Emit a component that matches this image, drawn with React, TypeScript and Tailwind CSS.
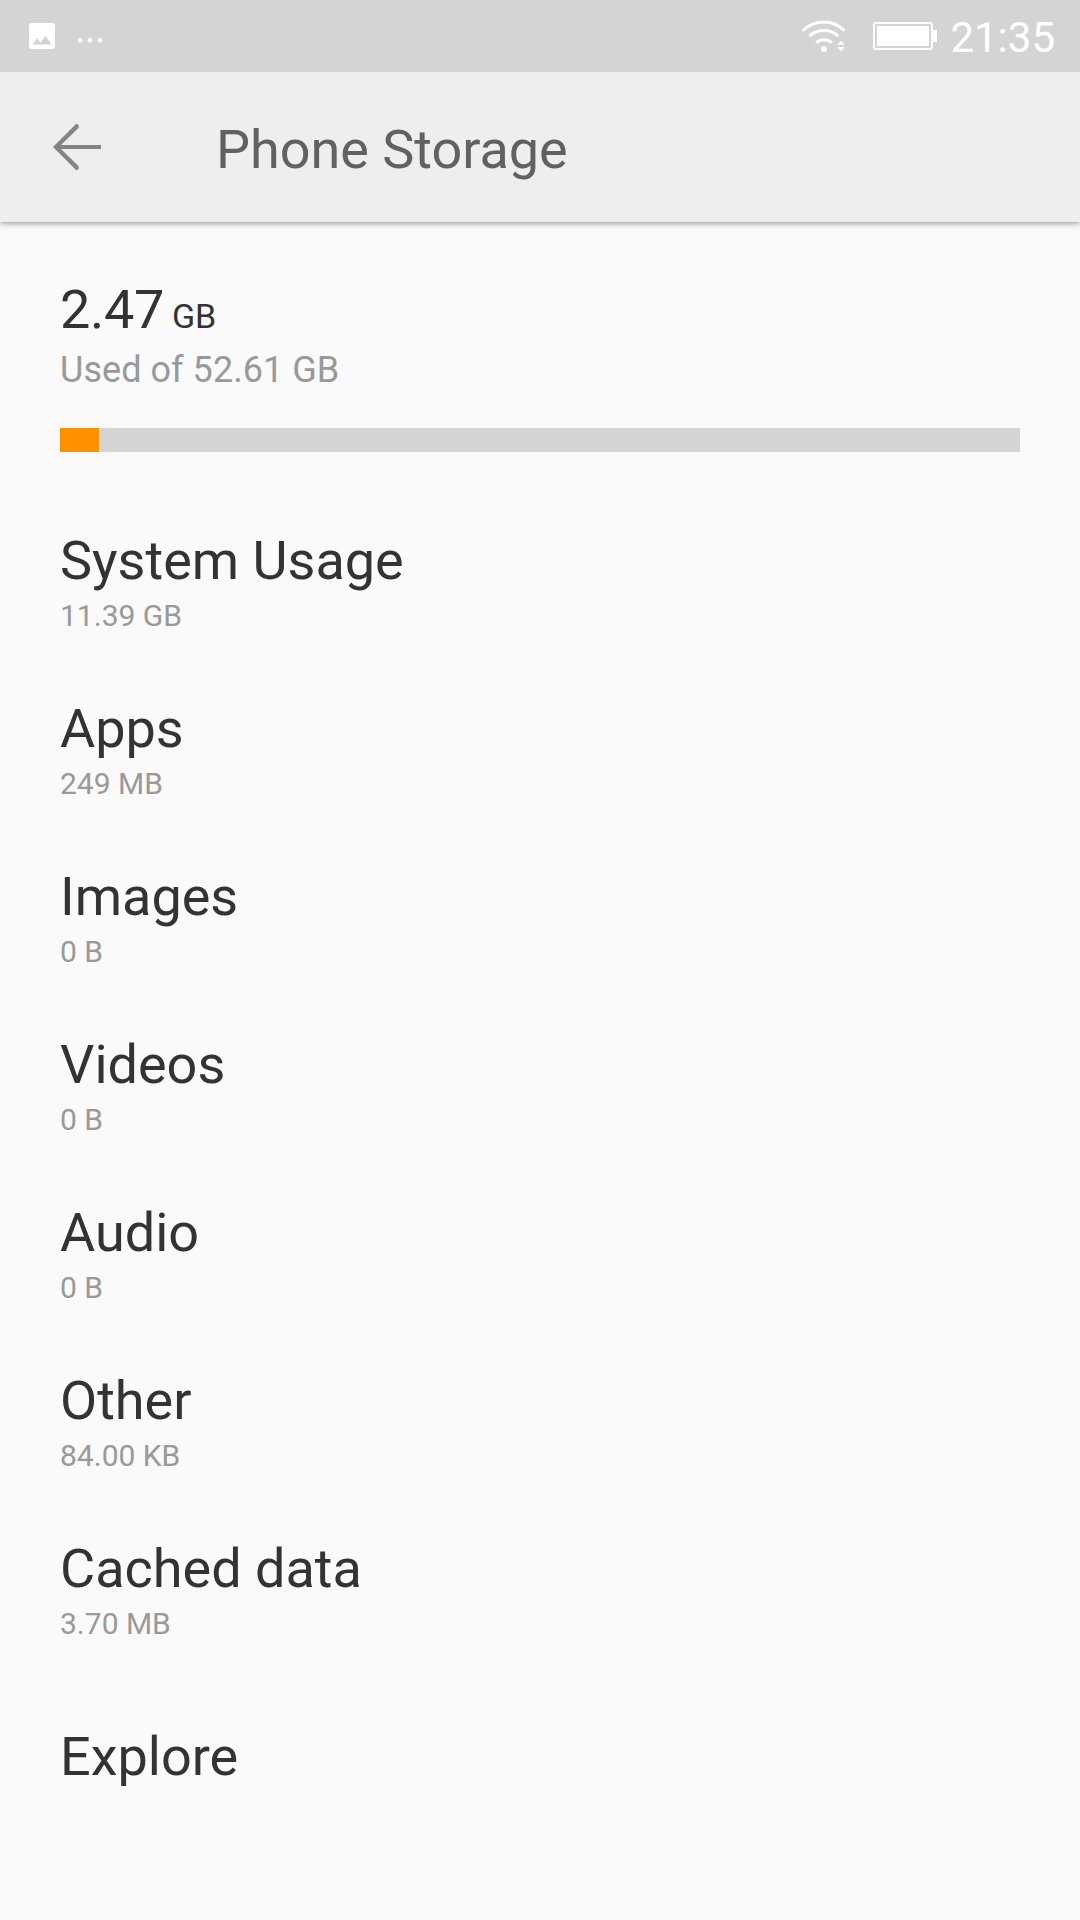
const categories = [
  { label: 'System Usage', size: '11.39 GB' },
  { label: 'Apps', size: '249 MB' },
  { label: 'Images', size: '0 B' },
  { label: 'Videos', size: '0 B' },
  { label: 'Audio', size: '0 B' },
  { label: 'Other', size: '84.00 KB' },
  { label: 'Cached data', size: '3.70 MB' },
];

function StatusBar() {
  return (
    <div className="relative z-10 h-[72px] bg-[#d4d4d4] flex items-center justify-between pl-[29px] pr-[25px] text-white">
      <div className="flex items-center">
        {/* Picture notification */}
        <svg width="26" height="26" viewBox="0 0 26 26">
          <path
            fillRule="evenodd"
            fill="currentColor"
            d="M3 0h20a3 3 0 0 1 3 3v20a3 3 0 0 1-3 3H3a3 3 0 0 1-3-3V3a3 3 0 0 1 3-3zM3.500 21.500h19.200L16.500 13l-5 6.500L8 15z"
          />
        </svg>
        {/* More notifications */}
        <svg className="ml-[22px] mt-[8px]" width="26" height="8" viewBox="0 0 26 8" fill="currentColor">
          <circle cx="3" cy="4.300" r="2.300" />
          <circle cx="13" cy="4.300" r="2.300" />
          <circle cx="23" cy="4.300" r="2.300" />
        </svg>
      </div>
      <div className="flex items-center">
        {/* Wifi */}
        <svg width="46" height="36" viewBox="0 0 46 36" fill="none" stroke="currentColor" strokeWidth="3" strokeLinecap="round">
          <path d="M2.700 12A29 29 0 0 1 42.700 12" />
          <path d="M9.500 17.200A21.700 21.700 0 0 1 36.300 17.200" />
          <path d="M16 24A13 13 0 0 1 30 24" />
          <circle cx="22.900" cy="31" r="3.100" fill="currentColor" stroke="none" />
          <path d="M36.300 26.800L40 22.400l3.700 4.400zM36.300 29h7.400L40 33.400z" fill="currentColor" stroke="none" />
        </svg>
        {/* Battery */}
        <div className="ml-[26px] w-[60px] h-7 border-2 border-white rounded-[3px] p-[2px]">
          <div className="h-full bg-white"></div>
        </div>
        <div className="w-1 h-3 bg-white"></div>
        <span className="ml-[13px] pt-[3px] text-[42px] leading-[50px]">21:35</span>
      </div>
    </div>
  );
}

function Header() {
  return (
    <header className="h-[150px] bg-[#eeeeee] flex items-center pl-[53px] shadow-[0_1px_6px_rgba(0,0,0,0.45)]">
      <svg width="48" height="48" viewBox="0 0 48 48" fill="#848484">
        <path d="M0 24L23.500 .5L25.700 2.200V4.800L8 21.900H48V26.100H8L25.700 43.200V45.800L23.500 47.500z" />
      </svg>
      <h1 className="ml-[115px] pt-[5px] text-[54px] leading-[66px] tracking-[-0.03px] text-[#616161]">Phone Storage</h1>
    </header>
  );
}

export default function App() {
  return (
    <div className="w-[1080px] h-[1920px] bg-[#fafafa] font-[Roboto,sans-serif] overflow-hidden">
      <StatusBar />
      <Header />
      <main className="px-[60px] pt-[55px]">
        <div className="h-[66px] leading-[66px] text-[54px] tracking-[-0.3px] text-[#333333]">
          2.47<span className="ml-[8px] text-[34px]">GB</span>
        </div>
        <div className="h-[54px] leading-[54px] text-[36px] tracking-[0.05px] text-[#999999]">Used of 52.61 GB</div>
        <div className="mt-[31px] h-6 bg-[#d4d4d4]">
          <div className="h-6 w-[39px] bg-[#ff9100]"></div>
        </div>
        <ul className="mt-[60px]">
          {categories.map((item) => (
            <li key={item.label} className="h-[168px] pt-4">
              <div className="h-[67px] leading-[66px] text-[54px] text-[#333333]">{item.label}</div>
              <div className="h-[42px] leading-[42px] text-[30px] text-[#999999]">{item.size}</div>
            </li>
          ))}
          <li className="pt-[36px] leading-[66px] text-[54px] text-[#333333]">Explore</li>
        </ul>
      </main>
    </div>
  );
}
